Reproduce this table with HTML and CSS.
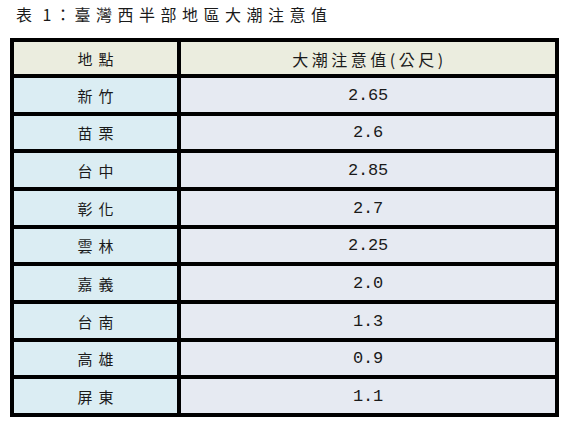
FILE: index.html
```html
<!DOCTYPE html>
<html lang="zh-Hant">
<head>
<meta charset="utf-8">
<link rel="stylesheet" href="styles.css">
</head>
<body>
<div class="page">
  <div class="title"><span class="title-no">表 1：</span><span class="title-text">臺灣西半部地區大潮注意值</span></div>
  <div class="table">
    <div class="cell head left">地點</div>
    <div class="cell head right">大潮注意值(公尺)</div>
    <div class="cell name">新竹</div><div class="cell val">2.65</div>
    <div class="cell name">苗栗</div><div class="cell val">2.6</div>
    <div class="cell name">台中</div><div class="cell val">2.85</div>
    <div class="cell name">彰化</div><div class="cell val">2.7</div>
    <div class="cell name">雲林</div><div class="cell val">2.25</div>
    <div class="cell name">嘉義</div><div class="cell val">2.0</div>
    <div class="cell name">台南</div><div class="cell val">1.3</div>
    <div class="cell name">高雄</div><div class="cell val">0.9</div>
    <div class="cell name">屏東</div><div class="cell val">1.1</div>
  </div>
</div>
</body>
</html>
```
FILE: styles.css
```css
html, body {
  margin: 0;
  padding: 0;
  background: #fff;
}
.page {
  padding: 4px 10px 0 10px;
  font-family: "Noto Sans CJK TC", "Noto Sans", sans-serif;
  color: #1a1a1a;
}
.title {
  margin-left: 6px;
  font-size: 16px;
  line-height: 21px;
  margin-bottom: 13px;
  white-space: nowrap;
}
.title-no {
  letter-spacing: 3.5px;
}
.title-text {
  letter-spacing: 5.5px;
}
.table {
  width: 549px;
  box-sizing: border-box;
  display: grid;
  grid-template-columns: 163px 374px;
  grid-template-rows: 32px repeat(9, 33.67px);
  gap: 4px;
  padding: 4px;
  background: #000;
}
.cell {
  display: flex;
  align-items: center;
  justify-content: center;
  font-size: 15px;
  padding-top: 1px;
  box-sizing: border-box;
}
.head {
  background: #ebeddf;
}
.head.left {
  letter-spacing: 6px;
  padding-left: 6px;
}
.head.right {
  font-size: 16px;
  letter-spacing: 3.5px;
  padding-left: 3px;
}
.name {
  background: #dbedf3;
  letter-spacing: 6px;
  padding-left: 6px;
}
.val {
  background: #e6eaf2;
  font-family: "Liberation Mono", monospace;
  font-size: 17px;
  letter-spacing: -0.2px;
}
```
